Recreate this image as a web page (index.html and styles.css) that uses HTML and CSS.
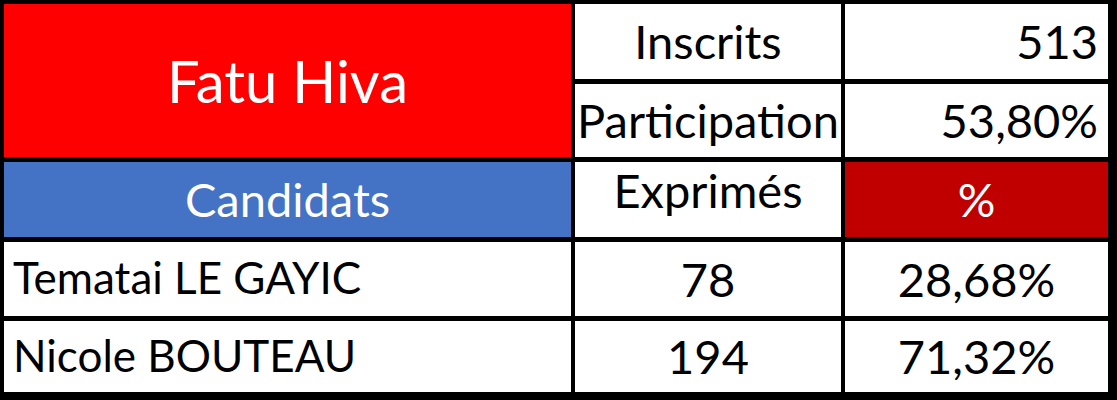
FILE: index.html
```html
<!DOCTYPE html>
<html lang="fr">
<head>
<meta charset="UTF-8">
<title>Fatu Hiva</title>
<link rel="stylesheet" href="styles.css">
</head>
<body>
<div class="board">
    <div class="cell commune">Fatu Hiva</div>
    <div class="cell center">Inscrits</div>
    <div class="cell right">513</div>
    <div class="cell center">Participation</div>
    <div class="cell right">53,80%</div>

    <div class="cell head-blue">Candidats</div>
    <div class="cell center exprimes">Exprimés</div>
    <div class="cell head-red">%</div>

    <div class="cell name">Tematai LE GAYIC</div>
    <div class="cell center">78</div>
    <div class="cell center">28,68%</div>

    <div class="cell name">Nicole BOUTEAU</div>
    <div class="cell center">194</div>
    <div class="cell center">71,32%</div>
</div>
</body>
</html>
```

FILE: styles.css
```css
body {
    margin: 0;
    background-color: #000000;
    font-family: Lato, "Liberation Sans", sans-serif;
}

.board {
    display: grid;
    grid-template-columns: 567px 266px 263px;
    grid-template-rows: 75px 73px 75px 74px 71px;
    gap: 5px 4px;
    padding: 4px 9px 8px 4px;
    background-color: #000000;
    width: 1104px;
}

.cell {
    display: flex;
    align-items: center;
    background-color: #ffffff;
    color: #000000;
    font-size: 47px;
    line-height: 1;
    white-space: nowrap;
}

.center {
    justify-content: center;
}

.right {
    justify-content: flex-end;
    padding-right: 10px;
}

.commune {
    grid-row: span 2;
    justify-content: center;
    background-color: #ff0000;
    color: #ffffff;
    font-size: 58px;
}

.head-blue {
    justify-content: center;
    background-color: #4472c4;
    color: #ffffff;
}

.head-red {
    justify-content: center;
    background-color: #c00000;
    color: #ffffff;
}

.exprimes {
    padding-bottom: 18px;
}

.name {
    padding-left: 9px;
    padding-bottom: 4px;
    font-size: 44px;
}
```
